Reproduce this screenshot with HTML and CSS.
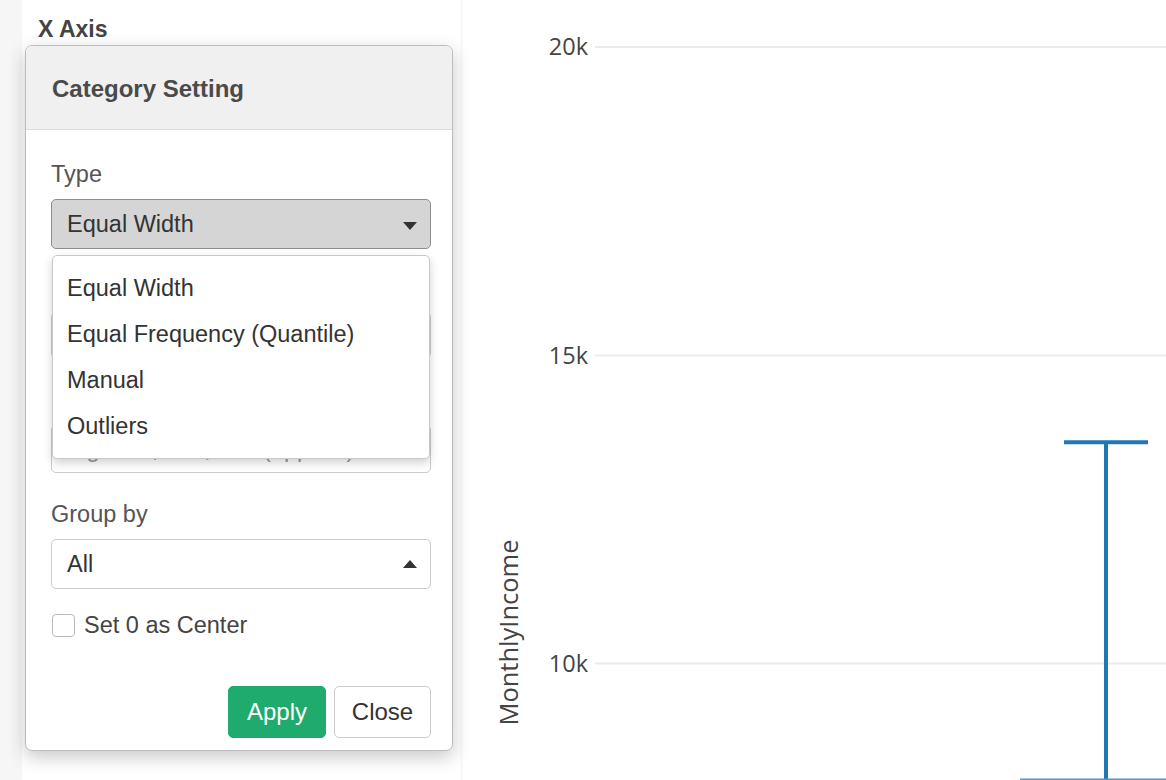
FILE: index.html
```html
<!DOCTYPE html>
<html lang="en">
<head>
<meta charset="utf-8">
<title>Category Setting</title>
<link rel="stylesheet" href="styles.css">
</head>
<body>
<div class="page">
  <aside class="sidebar">
    <h2 class="axis-title">X Axis</h2>

    <div class="popover">
      <div class="popover-header">Category Setting</div>
      <div class="popover-body">
        <div class="field">
          <label class="field-label">Type</label>
          <div class="select select-open">
            <span>Equal Width</span>
            <span class="caret caret-down"></span>
          </div>
          <ul class="menu">
            <li>Equal Width</li>
            <li>Equal Frequency (Quantile)</li>
            <li>Manual</li>
            <li>Outliers</li>
          </ul>
        </div>

        <div class="field field-2">
          <span class="field-label label-spacer"></span>
          <div class="input input-46"></div>
        </div>

        <div class="field field-3">
          <span class="field-label label-spacer"></span>
          <div class="input input-48 placeholder">e.g. 100, 200, 300 (applied)</div>
        </div>

        <div class="field field-4">
          <label class="field-label">Group by</label>
          <div class="select">
            <span>All</span>
            <span class="caret caret-up"></span>
          </div>
        </div>

        <div class="check-row">
          <span class="checkbox"></span>
          <span>Set 0 as Center</span>
        </div>

        <div class="actions">
          <button class="btn btn-primary">Apply</button>
          <button class="btn btn-default">Close</button>
        </div>
      </div>
    </div>
  </aside>

  <div class="divider"></div>

  <main class="chart">
    <svg class="plot" width="703" height="780" viewBox="0 0 703 780" xmlns="http://www.w3.org/2000/svg">
      <g class="grid">
        <line x1="132" y1="47" x2="703" y2="47"/>
        <line x1="132" y1="355.5" x2="703" y2="355.5"/>
        <line x1="132" y1="663.5" x2="703" y2="663.5"/>
      </g>
      <g class="ticks">
        <text x="125" y="55" text-anchor="end">20k</text>
        <text x="125" y="364" text-anchor="end">15k</text>
        <text x="125" y="672" text-anchor="end">10k</text>
      </g>
      <text class="axis-label" transform="translate(55,632.5) rotate(-90)" text-anchor="middle">MonthlyIncome</text>
      <line class="bar" x1="643" y1="442" x2="643" y2="780"/>
      <line class="bar" x1="601" y1="442.3" x2="685" y2="442.3"/>
      <line class="base" x1="557" y1="779.3" x2="703" y2="779.3"/>
    </svg>
  </main>
</div>
</body>
</html>
```

FILE: styles.css
```css
* { box-sizing: border-box; }

html, body {
  margin: 0;
  padding: 0;
}

body {
  background: #f6f6f6;
  font-family: "Liberation Sans", Arial, Helvetica, sans-serif;
  color: #333;
  width: 1166px;
  height: 780px;
  overflow: hidden;
}

.page {
  display: flex;
  height: 780px;
  padding-left: 22px;
}

.sidebar {
  position: relative;
  width: 438px;
  background: #fff;
  flex: none;
}

.divider {
  width: 3px;
  background: #f9f9f9;
  flex: none;
}

.axis-title {
  margin: 0;
  padding: 15px 0 0 16px;
  font-size: 23px;
  line-height: 28px;
  font-weight: bold;
  color: #444;
}

/* Popover */
.popover {
  position: absolute;
  left: 3px;
  top: 45px;
  width: 428px;
  background: #fff;
  border: 1px solid #bdbdbd;
  border-radius: 7px;
  box-shadow: 0 6px 18px rgba(0, 0, 0, 0.22);
  z-index: 5;
}

.popover-header {
  height: 84px;
  display: flex;
  align-items: center;
  padding-left: 26px;
  padding-top: 2px;
  background: #f0f0f0;
  border-bottom: 1px solid #dcdcdc;
  border-radius: 6px 6px 0 0;
  font-size: 24px;
  font-weight: bold;
  color: #4a4a4a;
}

.popover-body {
  padding: 30px 21px 12px 25px;
  display: flex;
  flex-direction: column;
}

.field {
  position: relative;
  display: flex;
  flex-direction: column;
}

.field-label {
  font-size: 23.5px;
  line-height: 28px;
  color: #555;
  margin-bottom: 11px;
}

.label-spacer {
  display: block;
  height: 28px;
}

.field-2 { margin-top: 24px; }
.field-3 { margin-top: 28px; }
.field-4 { margin-top: 27px; }

.select {
  height: 50px;
  border: 1px solid #cbcbcb;
  border-radius: 5px;
  background: #fff;
  display: flex;
  align-items: center;
  justify-content: space-between;
  padding: 0 13px 0 15px;
  font-size: 23.5px;
  color: #333;
}

.select-open {
  background: #d5d5d5;
  border-color: #8e8e8e;
}

.caret {
  width: 0;
  height: 0;
  border-left: 7px solid transparent;
  border-right: 7px solid transparent;
}

.caret-down {
  border-top: 8px solid #333;
  margin-top: 3px;
}

.caret-up {
  border-bottom: 8px solid #333;
  margin-top: -1px;
}

.input {
  border: 1px solid #cbcbcb;
  border-radius: 5px;
  background: #fff;
  display: flex;
  align-items: center;
  padding-left: 15px;
  font-size: 23.5px;
  color: #333;
}

.input-46 { height: 46px; }
.input-48 { height: 48px; }

.placeholder { color: #999; }

/* Dropdown menu */
.menu {
  position: absolute;
  left: 1px;
  top: 95px;
  width: 378px;
  margin: 0;
  padding: 9px 0;
  list-style: none;
  background: #fff;
  border: 1px solid #c8c8c8;
  border-radius: 5px;
  box-shadow: 0 4px 10px rgba(0, 0, 0, 0.18);
  z-index: 10;
}

.menu li {
  height: 46px;
  line-height: 46px;
  padding-left: 14px;
  font-size: 23.5px;
  color: #333;
}

/* Checkbox */
.check-row {
  margin-top: 25px;
  display: flex;
  align-items: center;
  gap: 9px;
  height: 23px;
  font-size: 23.5px;
  color: #444;
  padding-left: 1px;
}

.checkbox {
  width: 23px;
  height: 23px;
  border: 1px solid #bbb;
  border-radius: 4px;
  background: #fff;
}

/* Buttons */
.actions {
  margin-top: 49px;
  display: flex;
  justify-content: flex-end;
  gap: 8px;
}

.btn {
  height: 52px;
  border-radius: 5px;
  font-family: "Liberation Sans", Arial, Helvetica, sans-serif;
  font-size: 24px;
  padding: 0;
}

.btn-primary {
  width: 98px;
  background: #1fab6e;
  border: 1px solid #1fab6e;
  color: #fff;
}

.btn-default {
  width: 97px;
  background: #fff;
  border: 1px solid #cbcbcb;
  color: #333;
}

/* Chart */
.chart {
  flex: 1;
  background: #fff;
}

.plot {
  display: block;
}

.grid line {
  stroke: #ebebeb;
  stroke-width: 2;
}

.ticks text {
  font-family: "Open Sans", "Noto Sans", sans-serif;
  font-size: 23.5px;
  fill: #444;
}

.axis-label {
  font-family: "Open Sans", "Noto Sans", sans-serif;
  font-size: 25.5px;
  fill: #444;
}

.bar {
  stroke: #1f77b4;
  stroke-width: 4;
}

.base {
  stroke: #5c93c2;
  stroke-width: 1.5;
}
```
